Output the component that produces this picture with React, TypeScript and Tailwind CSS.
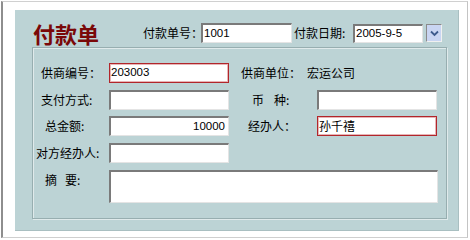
import React from "react";

const cjk = "font-['Noto_Sans_CJK_SC',sans-serif]";
const num = "font-['Liberation_Sans','Noto_Sans_CJK_SC',sans-serif]";

const sunken =
  "bg-white border-t-2 border-l-2 border-t-[#7a7a7a] border-l-[#7a7a7a] border-b border-r border-b-[#e4e4e4] border-r-[#e4e4e4]";
const redBox =
  "bg-white border border-[#b1262b] shadow-[inset_0_0_0_1px_#e8b4b6]";

function Field({
  w,
  h = 20,
  red,
  value,
  right,
  cn,
}: {
  w: string;
  h?: number;
  red?: boolean;
  value?: string;
  right?: boolean;
  cn?: boolean;
}) {
  return (
    <div
      className={`${w} ${h === 20 ? "h-[20px]" : h === 19 ? "h-[19px]" : "h-[33px]"} ${
        red ? redBox : sunken
      } shrink-0 flex items-center ${right ? "justify-end pr-[3px]" : "pl-[1px]"} text-black leading-none ${
        cn ? `${cjk} text-[12px]` : `${num} text-[11.5px]`
      }`}
    >
      {value}
    </div>
  );
}

export default function App() {
  return (
    <div className="w-[470px] h-[240px] bg-white pt-[1px] pl-[1px]">
      <div className="w-[467px] h-[237px] border-l-2 border-l-[#8e8e8e] border-t border-t-[#d0d0d0] border-r border-r-[#c4c4c4] border-b border-b-[#cfcfcf] pl-[12px] pt-[8px]">
        <div className="w-[444px] h-[221px] bg-[#bcd3d5] border-r border-b border-[#a9bfc1] pt-[11px]">
          {/* header */}
          <div className={`flex items-center h-[24px] pl-[18px] ${cjk} text-[12px] text-black`}>
            <span className="w-[110px] shrink-0 text-[22px] leading-[24px] font-semibold text-[#7a0808]">
              付款单
            </span>
            <span className="w-[58px] shrink-0 whitespace-nowrap">付款单号：</span>
            <Field w="w-[91px]" value="1001" />
            <span className="w-[61px] shrink-0 pl-[2px] whitespace-nowrap">付款日期:</span>
            <Field w="w-[70px]" h={19} value="2005-9-5" />
            <div className="ml-[3px] w-[16px] h-[18px] shrink-0 border-t border-l border-t-[#8a8a8a] border-l-[#8a8a8a] border-b border-r border-b-[#f0f0f0] border-r-[#f0f0f0] bg-[#c9d5f2] flex items-center justify-center">
              <svg width="9" height="7" viewBox="0 0 9 7">
                <path d="M1 1.5 L4.5 5 L8 1.5" fill="none" stroke="#3d5a8c" strokeWidth="1.8" />
              </svg>
            </div>
          </div>

          {/* group box */}
          <div className={`ml-[17px] mt-[2px] w-[415px] h-[172px] border border-[#97aeb0] shadow-[inset_1px_1px_0_#dfeaeb,1px_1px_0_#dfeaeb] pt-[15px] ${cjk} text-[12px] text-black`}>
            {/* row 1 */}
            <div className="flex items-center h-[20px]">
              <span className="w-[76px] shrink-0 pl-[8px] whitespace-nowrap">供商编号：</span>
              <Field w="w-[120px]" red value="203003" />
              <span className="w-[78px] shrink-0 pl-[12px] whitespace-nowrap">供商单位：</span>
              <span className="whitespace-nowrap">宏运公司</span>
            </div>
            {/* row 2 */}
            <div className="flex items-center h-[20px] mt-[7px]">
              <span className="w-[76px] shrink-0 pl-[8px] whitespace-nowrap">支付方式:</span>
              <Field w="w-[120px]" />
              <span className="w-[88px] shrink-0 pl-[23px] whitespace-nowrap">
                币<span className="ml-[10px]">种</span>:
              </span>
              <Field w="w-[120px]" />
            </div>
            {/* row 3 */}
            <div className="flex items-center h-[20px] mt-[6px]">
              <span className="w-[76px] shrink-0 pl-[12px] whitespace-nowrap">总金额:</span>
              <Field w="w-[120px]" value="10000" right />
              <span className="w-[88px] shrink-0 pl-[19px] whitespace-nowrap">经办人：</span>
              <Field w="w-[120px]" red value="孙千禧" cn />
            </div>
            {/* row 4 */}
            <div className="flex items-center h-[20px] mt-[7px]">
              <span className="w-[76px] shrink-0 pl-[3px] whitespace-nowrap">对方经办人:</span>
              <Field w="w-[120px]" />
            </div>
            {/* row 5 */}
            <div className="flex items-start mt-[7px]">
              <span className="w-[76px] shrink-0 pl-[12px] pt-[1px] whitespace-nowrap">
                摘<span className="ml-[8px]">要</span>:
              </span>
              <Field w="w-[329px]" h={33} />
            </div>
          </div>
        </div>
      </div>
    </div>
  );
}
